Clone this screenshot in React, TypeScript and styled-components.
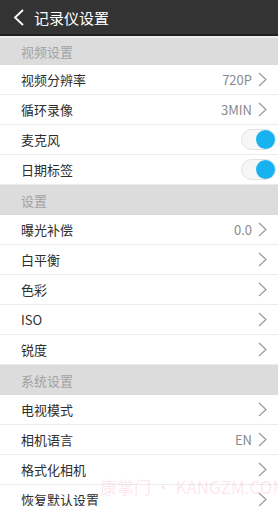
import React, { FC } from 'react';
import styled, { createGlobalStyle } from 'styled-components';

const GlobalStyle = createGlobalStyle`
  html, body {
    margin: 0;
    padding: 0;
    background: #fff;
  }
  body {
    font-family: "Noto Sans CJK SC", "Noto Sans", sans-serif;
    overflow: hidden;
  }
`;

const Screen = styled.div`
  position: relative;
  width: 278px;
  height: 506px;
  overflow: hidden;
  background: #fff;
`;

const Header = styled.div`
  height: 34px;
  background: #333333;
  border-bottom: 2px solid #1f1f1f;
  display: flex;
  align-items: center;
  padding-left: 13px;
  gap: 10px;
  color: #fff;
  font-size: 15px;
`;

const Section = styled.div<{ $first?: boolean }>`
  height: ${(p) => (p.$first ? 27 : 30)}px;
  background: #dcdcdc;
  border-top: ${(p) => (p.$first ? '2px solid #ededed' : 'none')};
  display: flex;
  align-items: center;
  padding-left: 21px;
  font-size: 13px;
  color: #a2a2a2;
`;

const Row = styled.div`
  height: 29px;
  border-bottom: 1px solid #ececec;
  display: flex;
  align-items: center;
  padding: 0 11px 0 21px;
  font-size: 13px;
  color: #2e2e2e;
`;

const Label = styled.span`
  flex: 1;
`;

const Value = styled.span`
  color: #8a8a8a;
  font-size: 13px;
  margin-right: 6px;
`;

const Track = styled.div`
  width: 35px;
  height: 21px;
  box-sizing: border-box;
  border: 1px solid #e2e2e2;
  background: #f6f6f6;
  border-radius: 11px;
  margin-right: -9px;
  display: flex;
  align-items: center;
  justify-content: flex-end;
  padding-right: 0;
`;

const Knob = styled.div`
  width: 19px;
  height: 19px;
  border-radius: 50%;
  background: #17b3f0;
`;

const Watermark = styled.div`
  position: absolute;
  left: 100px;
  top: 474px;
  font-size: 17px;
  color: rgba(255, 140, 180, 0.22);
  white-space: nowrap;
  pointer-events: none;
`;

const Chevron: FC = () => (
  <svg width="9" height="15" viewBox="0 0 9 15">
    <polyline points="1,1 8,7.5 1,14" fill="none" stroke="#9a9a9a" strokeWidth="1.2" />
  </svg>
);

const BackIcon: FC = () => (
  <svg width="11" height="17" viewBox="0 0 11 17">
    <polyline points="10,1 2,8.5 10,16" fill="none" stroke="#fff" strokeWidth="1.8" />
  </svg>
);

type Item = { label: string; value?: string; toggle?: boolean };

const groups: { title: string; items: Item[] }[] = [
  {
    title: '视频设置',
    items: [
      { label: '视频分辨率', value: '720P' },
      { label: '循环录像', value: '3MIN' },
      { label: '麦克风', toggle: true },
      { label: '日期标签', toggle: true },
    ],
  },
  {
    title: '设置',
    items: [
      { label: '曝光补偿', value: '0.0' },
      { label: '白平衡' },
      { label: '色彩' },
      { label: 'ISO' },
      { label: '锐度' },
    ],
  },
  {
    title: '系统设置',
    items: [
      { label: '电视模式' },
      { label: '相机语言', value: 'EN' },
      { label: '格式化相机' },
      { label: '恢复默认设置' },
    ],
  },
];

const App: FC = () => (
  <Screen>
    <GlobalStyle />
    <Header>
      <BackIcon />
      <span>记录仪设置</span>
    </Header>
    {groups.map((g, gi) => (
      <React.Fragment key={g.title}>
        <Section $first={gi === 0}>{g.title}</Section>
        {g.items.map((it) => (
          <Row key={it.label}>
            <Label>{it.label}</Label>
            {it.value && <Value>{it.value}</Value>}
            {it.toggle ? (
              <Track>
                <Knob />
              </Track>
            ) : (
              <Chevron />
            )}
          </Row>
        ))}
      </React.Fragment>
    ))}
    <Watermark>康掌门 • KANGZM.COM</Watermark>
  </Screen>
);

export default App;
